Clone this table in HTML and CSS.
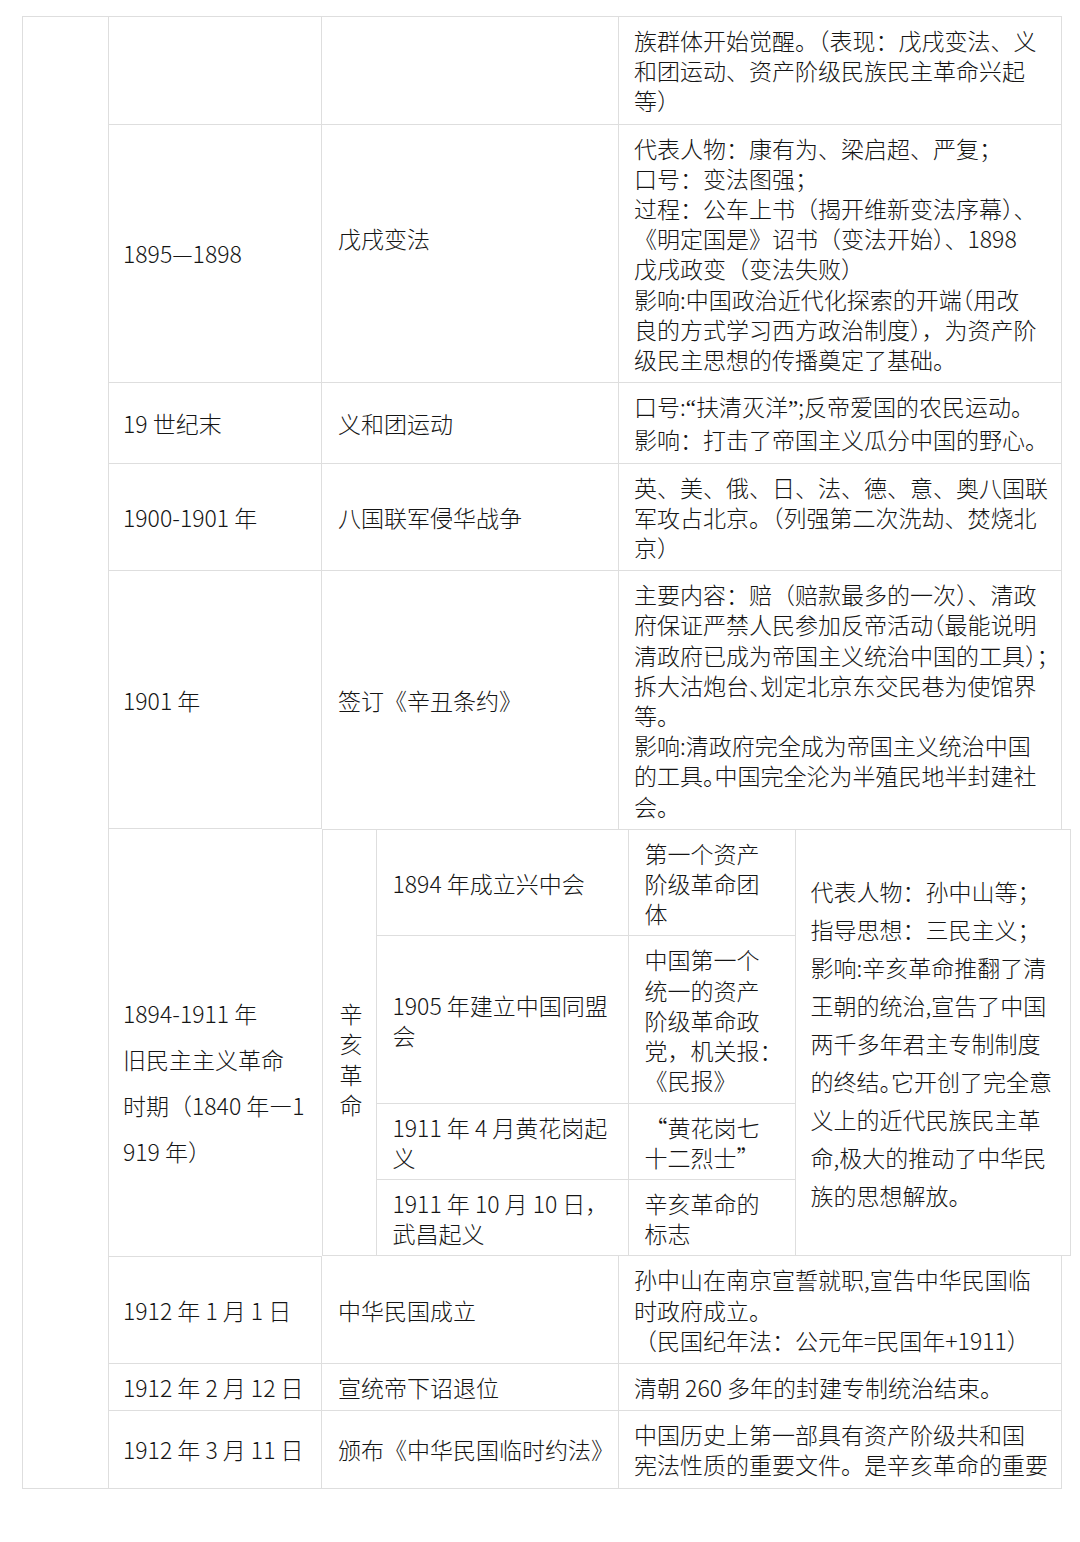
FILE: index.html
```html
<!DOCTYPE html>
<html lang="zh-CN">
<head>
<meta charset="utf-8">
<title>近代史表格</title>
<link rel="stylesheet" href="styles.css">
</head>
<body>
<table class="sheet">
  <colgroup>
    <col class="c-blank">
    <col class="c-date">
    <col class="c-event">
    <col class="c-desc">
  </colgroup>
  <tbody>
    <tr>
      <td class="blank" rowspan="9"></td>
      <td></td>
      <td></td>
      <td class="desc">族群体开始觉醒。（表现：戊戌变法、义<br>和团运动、资产阶级民族民主革命兴起<br>等）</td>
    </tr>
    <tr>
      <td>1895—1898</td>
      <td class="ev lift">戊戌变法</td>
      <td class="desc">代表人物：康有为、梁启超、严复；<br>口号：变法图强；<br>过程：公车上书（揭开维新变法序幕）、<br>《明定国是》诏书（变法开始）、1898<br>戊戌政变（变法失败）<br>影响:中国政治近代化探索的开端<span class="h">（</span>用改<br>良的方式学习西方政治制度），为资产阶<br>级民主思想的传播奠定了基础。</td>
    </tr>
    <tr>
      <td>19 世纪末</td>
      <td class="ev">义和团运动</td>
      <td class="desc">口号:<span class="lat">“</span>扶清灭洋<span class="lat">”</span>;反帝爱国的农民运动。<br>影响：打击了帝国主义瓜分中国的野心。</td>
    </tr>
    <tr>
      <td>1900-1901 年</td>
      <td class="ev">八国联军侵华战争</td>
      <td class="desc">英、美、俄、日、法、德、意、奥八国联<br>军攻占北京。（列强第二次洗劫、焚烧北<br>京）</td>
    </tr>
    <tr>
      <td>1901 年</td>
      <td class="ev">签订《辛丑条约》</td>
      <td class="desc">主要内容：赔（赔款最多的一次）、清政<br>府保证严禁人民参加反帝活动<span class="h">（</span>最能说明<br>清政府已成为帝国主义统治中国的工具<span class="h">）；</span><br>拆大沽炮台<span class="h">、</span>划定北京东交民巷为使馆界<br>等。<br>影响:清政府完全成为帝国主义统治中国<br>的工具<span class="h">。</span>中国完全沦为半殖民地半封建社<br>会。</td>
    </tr>
    <tr>
      <td class="period">1894-1911 年<br>旧民主主义革命<br>时期（1840 年—1<br>919 年）</td>
      <td class="nest" colspan="2">
        <table class="xinhai">
          <colgroup>
            <col class="x-vert">
            <col class="x-event">
            <col class="x-desc">
            <col class="x-impact">
          </colgroup>
          <tbody>
            <tr>
              <td class="vert" rowspan="4">辛<br>亥<br>革<br>命</td>
              <td class="sub">1894 年成立兴中会</td>
              <td class="sub">第一个资产<br>阶级革命团<br>体</td>
              <td class="impact" rowspan="4">代表人物：孙中山等；<br>指导思想：三民主义；<br>影响:辛亥革命推翻了清<br>王朝的统治,宣告了中国<br>两千多年君主专制制度<br>的终结<span class="h">。</span>它开创了完全意<br>义上的近代民族民主革<br>命,极大的推动了中华民<br>族的思想解放。</td>
            </tr>
            <tr>
              <td class="sub">1905 年建立中国同盟<br>会</td>
              <td class="sub">中国第一个<br>统一的资产<br>阶级革命政<br>党，机关报<span class="h">：</span><br>《民报》</td>
            </tr>
            <tr>
              <td class="sub">1911 年 4 月黄花岗起<br>义</td>
              <td class="sub">“黄花岗七<br>十二烈士”</td>
            </tr>
            <tr>
              <td class="sub">1911 年 10 月 10 日，<br>武昌起义</td>
              <td class="sub">辛亥革命的<br>标志</td>
            </tr>
          </tbody>
        </table>
      </td>
    </tr>
    <tr>
      <td>1912 年 1 月 1 日</td>
      <td class="ev">中华民国成立</td>
      <td class="desc">孙中山在南京宣誓就职,宣告中华民国临<br>时政府成立。<br>（民国纪年法：公元年=民国年+1911）</td>
    </tr>
    <tr>
      <td>1912 年 2 月 12 日</td>
      <td class="ev">宣统帝下诏退位</td>
      <td class="desc">清朝 260 多年的封建专制统治结束。</td>
    </tr>
    <tr>
      <td>1912 年 3 月 11 日</td>
      <td class="ev">颁布《中华民国临时约法》</td>
      <td class="desc">中国历史上第一部具有资产阶级共和国<br>宪法性质的重要文件。是辛亥革命的重要</td>
    </tr>
  </tbody>
</table>
</body>
</html>
```

FILE: styles.css
```css
html, body {
  margin: 0;
  background: #ffffff;
}

body {
  width: 1080px;
  min-height: 1542px;
  padding: 16px 0 0 22px;
  box-sizing: border-box;
  font-family: "Noto Sans CJK SC", "Noto Sans", sans-serif;
  font-size: 23px;
  font-weight: 300;
  color: #151515;
}

.sheet {
  border-collapse: collapse;
  table-layout: fixed;
  width: 1039px;
}

.c-blank { width: 86px; }
.c-date { width: 213px; }
.c-event { width: 297px; }
.c-desc { width: 443px; }

.sheet td {
  border: 1px solid #dedede;
  padding: 8px 6px 8px 14px;
  vertical-align: middle;
  white-space: nowrap;
  line-height: 30.2px;
}

.sheet td.ev {
  padding-left: 16px;
}

.sheet td.desc {
  padding-left: 15px;
}

.sheet td.lift {
  padding-bottom: 38px;
}

.sheet td.period {
  line-height: 46px;
  padding-top: 86px;
}

.sheet td.nest {
  padding: 0;
  border: hidden;
  vertical-align: top;
}

.xinhai {
  border-collapse: collapse;
  table-layout: fixed;
  width: 748px;
}

.x-vert { width: 54px; }
.x-event { width: 252px; }
.x-desc { width: 167px; }
.x-impact { width: 275px; }

.xinhai td.sub {
  padding: 8px 6px 7px 16px;
}

.xinhai td.vert {
  padding: 40px 4px 8px 17px;
}

.xinhai td.impact {
  line-height: 38px;
  padding-left: 15px;
}

.h {
  font-feature-settings: "halt" 1;
}

.lat {
  font-family: "Liberation Serif", serif;
}
```
